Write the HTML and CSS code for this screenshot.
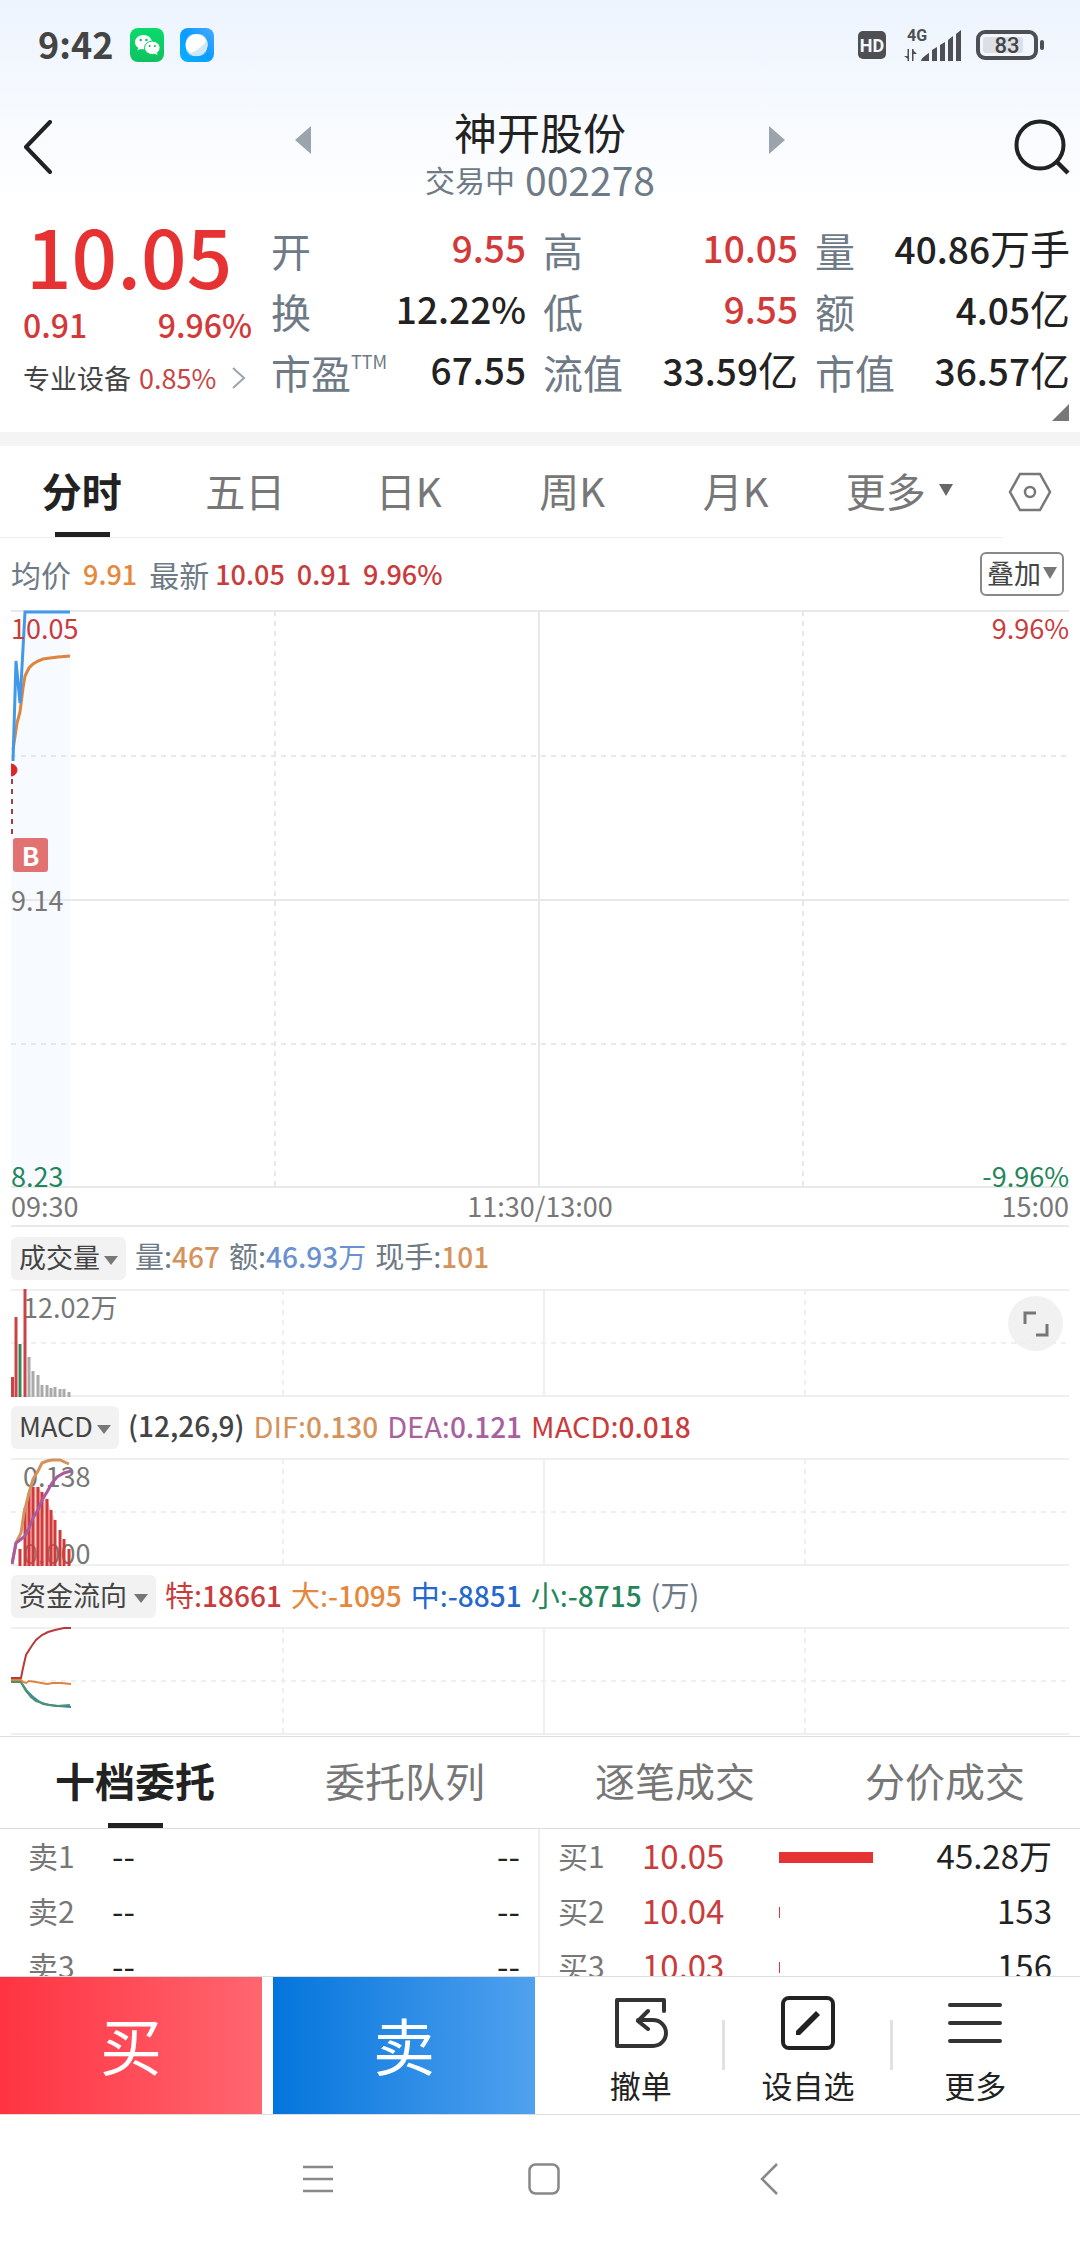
FILE: index.html
```html
<!DOCTYPE html>
<html lang="zh-CN">
<head>
<meta charset="utf-8">
<meta name="viewport" content="width=device-width, initial-scale=1">
<title>神开股份 002278</title>
<link rel="stylesheet" href="styles.css">
</head>
<body>
<div class="app">
  <div class="top">
    <div class="status">
      <span class="clock">9:42</span>
      <svg class="app-icon" width="34" height="34" viewBox="0 0 34 34" aria-hidden="true">
        <defs><linearGradient id="wx" x1="0" y1="0" x2="0" y2="1"><stop offset="0" stop-color="#09dc6b"/><stop offset="1" stop-color="#10c160"/></linearGradient></defs>
        <rect width="34" height="34" rx="8" fill="url(#wx)"/>
        <path d="M13.500 7C8.800 7 5 10.200 5 14.200c0 2.300 1.200 4.200 3.200 5.500L7.500 22.500l3-1.600c1 .3 2 .4 3 .4C18 21.300 22 18.200 22 14.200S18.200 7 13.500 7z" fill="#fff"/>
        <ellipse cx="22.300" cy="19.800" rx="7.800" ry="6.700" fill="#fff" stroke="#0ecb64" stroke-width="1"/>
        <path d="M24 25l3.500 2.200-.7-3z" fill="#fff"/>
        <g fill="#10b95c"><circle cx="10.700" cy="12" r="1.200"/><circle cx="16.400" cy="12" r="1.200"/><circle cx="19.700" cy="18" r="1"/><circle cx="24.800" cy="18" r="1"/></g>
      </svg>
      <svg class="app-icon" width="34" height="34" viewBox="0 0 34 34" aria-hidden="true">
        <defs><linearGradient id="br" x1="0" y1="1" x2="1" y2="0"><stop offset="0" stop-color="#07b2ff"/><stop offset=".5" stop-color="#0a9cff"/><stop offset="1" stop-color="#4ca8ff"/></linearGradient></defs>
        <rect width="34" height="34" rx="8" fill="url(#br)"/>
        <rect x="6" y="6" width="21" height="22" rx="7" fill="#fff" opacity=".25"/>
        <circle cx="16.500" cy="17" r="11" fill="#fff"/>
        <path d="M27 12c2 6-1 13-7 15.500-4 1.500-8 .5-10.500-2C17 23 23 18 27 12z" fill="#cfe6fb"/>
      </svg>
      <span class="grow"></span>
      <svg class="hd" width="28" height="28" viewBox="0 0 28 28" role="img" aria-label="HD">
        <rect width="28" height="28" rx="5" fill="#4e4f53"/>
        <text x="14" y="21" text-anchor="middle" font-family="Roboto, sans-serif" font-weight="700" font-size="18" fill="#f3f7fd">HD</text>
      </svg>
      <svg class="signal" width="58" height="36" viewBox="0 -4 58 36" role="img" aria-label="4G">
        <text x="3" y="12" font-family="Roboto, sans-serif" font-weight="700" font-size="16" fill="#4e4f53">4G</text>
        <path d="M5 20v12H3.500v-2.500L0 27h3.500v-7zM8 32V20h1.500v1.500L13 25H9.500v7z" fill="#4e4f53"/>
        <path d="M17 32q0-3 8-8v8zM28 21l5-3v14h-5zM36 16l5-3v19h-5zM44 11l5-4v25h-5zM52 5l5-4v31h-5z" fill="#4e4f53"/>
      </svg>
      <svg width="70" height="30" viewBox="0 0 70 30" role="img" aria-label="83%">
        <rect x="2" y="2" width="58" height="26" rx="7" fill="none" stroke="#4e4f53" stroke-width="4"/>
        <rect x="7" y="7" width="40" height="16" rx="3" fill="#dcdfe5"/>
        <rect x="64" y="10" width="4" height="10" rx="2" fill="#4e4f53"/>
        <text x="31" y="23" text-anchor="middle" font-family="Roboto, sans-serif" font-weight="500" font-size="22" fill="#444">83</text>
      </svg>
    </div>
    <header class="title-bar">
      <button class="icon-btn back" aria-label="返回"><svg width="30" height="54" viewBox="0 0 30 54"><path d="M27 2L3 27l24 25" fill="none" stroke="#222" stroke-width="4" stroke-linecap="round" stroke-linejoin="round"/></svg></button>
      <div class="switcher">
        <button class="icon-btn" aria-label="上一只"><svg width="16" height="28" viewBox="0 0 16 28"><path d="M16 0v28L0 14z" fill="#9ba3ad"/></svg></button>
        <div class="names">
          <h1>神开股份</h1>
          <p><span>交易中</span><span class="code">002278</span></p>
        </div>
        <button class="icon-btn" aria-label="下一只"><svg width="16" height="28" viewBox="0 0 16 28"><path d="M0 0v28l16-14z" fill="#9ba3ad"/></svg></button>
      </div>
      <button class="icon-btn" aria-label="搜索"><svg width="56" height="56" viewBox="0 0 56 56"><circle cx="26" cy="26" r="23.500" fill="none" stroke="#222" stroke-width="4"/><path d="M43 43l11 11" stroke="#222" stroke-width="4.500"/></svg></button>
    </header>
    <section class="quote">
      <div class="price">
        <strong>10.05</strong>
        <div class="change"><span>0.91</span><span>9.96%</span></div>
        <a class="sector" href="#">专业设备 <span>0.85%</span><svg width="14" height="22" viewBox="0 0 14 22"><path d="M1 1l11 10L1 21" fill="none" stroke="#9ba3ad" stroke-width="2"/></svg></a>
      </div>
      <dl class="stats">
        <div><dt>开</dt><dd class="up">9.55</dd></div>
        <div><dt>高</dt><dd class="up">10.05</dd></div>
        <div><dt>量</dt><dd>40.86<span>万手</span></dd></div>
        <div><dt>换</dt><dd>12.22%</dd></div>
        <div><dt>低</dt><dd class="up">9.55</dd></div>
        <div><dt>额</dt><dd>4.05<span>亿</span></dd></div>
        <div><dt>市盈<sup>TTM</sup></dt><dd>67.55</dd></div>
        <div><dt>流值</dt><dd>33.59<span>亿</span></dd></div>
        <div><dt>市值</dt><dd>36.57<span>亿</span></dd></div>
      </dl>
      <svg class="corner" width="17" height="17" viewBox="0 0 17 17" aria-hidden="true"><path d="M17 0v17H0z" fill="#777"/></svg>
    </section>
  </div>

  <div class="periods">
    <nav>
      <button class="tab active">分时</button>
      <button class="tab">五日</button>
      <button class="tab">日K</button>
      <button class="tab">周K</button>
      <button class="tab">月K</button>
      <button class="tab more">更多<svg width="14" height="12" viewBox="0 0 14 12"><path d="M0 0h14L7 12z" fill="#666"/></svg></button>
    </nav>
    <button class="icon-btn gear" aria-label="设置"><svg width="44" height="40" viewBox="0 0 44 40"><path d="M12 2h20l10 18-10 18H12L2 20z" fill="none" stroke="#777" stroke-width="2.500"/><circle cx="22" cy="20" r="5" fill="none" stroke="#777" stroke-width="2.500"/></svg></button>
  </div>

  <main class="charts">
    <div class="legend">
      <span>均价</span><span class="num orange">9.91</span><span class="latest">最新<span class="num red">10.05</span></span><span class="num red">0.91</span><span class="num red">9.96%</span>
      <button class="overlay">叠加<svg width="14" height="12" viewBox="0 0 14 12"><path d="M0 0h14L7 12z" fill="#777"/></svg></button>
    </div>
    <div class="plot">
      <svg viewBox="0 0 1058 578" preserveAspectRatio="none" height="578" aria-hidden="true">
        <path d="M0 151L5 51l4 42 5-91h45v574H0z" fill="#f7faff"/>
        <g stroke="#e8e8e8" stroke-width="2" fill="none">
          <path d="M0 1h1058M0 290h1058M0 577h1058M528 1v576"/>
          <path d="M0 146h1058M0 434h1058M264 1v576M792 1v576" stroke-dasharray="5 5"/>
        </g>
        <path d="M2 140L6 113l3-11 3-24 2-12 4-8 4-4 5-3 5-2 7-1 8-1 12-1" fill="none" stroke="#dd843f" stroke-width="3"/>
        <path d="M2 151L5 51l4 42 5-91h45" fill="none" stroke="#4299ea" stroke-width="3"/>
        <path d="M0 154a6 6 0 0 1 0 12z" fill="#d92626" stroke="#d92626"/>
        <path d="M1 169v56" stroke="#a04040" stroke-width="2" stroke-dasharray="5 5"/>
      </svg>
      <span class="mark red at-top">10.05</span>
      <span class="mark red at-top end">9.96%</span>
      <span class="mark at-mid">9.14</span>
      <span class="mark green at-bottom">8.23</span>
      <span class="mark green at-bottom end">-9.96%</span>
      <span class="buy-flag">B</span>
    </div>
    <div class="times"><span>09:30</span><span>11:30/13:00</span><span>15:00</span></div>

    <div class="indicator">
      <label class="pick"><select aria-label="指标一"><option>成交量</option></select></label>
      <span>量:<b class="tan">467</b></span><span>额:<b class="sky">46.93<i>万</i></b></span><span>现手:<b class="tan">101</b></span>
    </div>
    <div class="plot">
      <span class="mark sub-top">12.02万</span>
      <svg viewBox="0 0 1058 108" preserveAspectRatio="none" height="108" aria-hidden="true">
        <g stroke="#efefef" stroke-width="2" fill="none">
          <path d="M0 1h1058M0 107h1058M533 1v106"/>
          <path d="M0 54h1058M272 1v106M794 1v106" stroke-dasharray="5 5"/>
        </g>
        <g stroke-width="3">
          <path d="M1.500 88v20M5 28v80M14 0v108" stroke="#c94444"/>
          <path d="M9 55v53" stroke="#328661"/>
          <path d="M18 68v40M22 82v26M27 86v22M31 96v12M36 96v12M40 99v9M44 98v10M49 100v8M53 100v8M58 103v5" stroke="#aaa"/>
        </g>
      </svg>
      <button class="expand" aria-label="全屏"><svg width="26" height="26" viewBox="0 0 26 26"><path d="M2 13V2h11M24 13v11H13" fill="none" stroke="#777" stroke-width="3"/></svg></button>
    </div>

    <div class="indicator">
      <label class="pick"><select aria-label="指标二"><option>MACD</option></select></label>
      <b class="dark">(12,26,9)</b><span class="tan">DIF:<b>0.130</b></span><span class="purple">DEA:<b>0.121</b></span><span class="red">MACD:<b>0.018</b></span>
    </div>
    <div class="plot">
      <span class="mark sub-top">0.138</span>
      <span class="mark sub-bottom">0.000</span>
      <svg viewBox="0 0 1058 108" preserveAspectRatio="none" height="108" aria-hidden="true">
        <g stroke="#efefef" stroke-width="2" fill="none">
          <path d="M0 1h1058M0 107h1058M533 1v106"/>
          <path d="M0 54h1058M272 1v106M794 1v106" stroke-dasharray="5 5"/>
        </g>
        <path d="M14 50l4-15 4-6h5l4 5 5 7 4 11 4 10v46H14z" fill="#f3766e" opacity=".35"/>
        <path d="M9 91v17M14 50v58M18 35v73M22 29v79M27 29v79M31 34v74M36 41v67M40 52v56M44 62v46M49 72v36M53 81v27M58 91v17" stroke="#cf3b3b" stroke-width="3"/>
        <path d="M1 106L5 85l5-10 3-20 5-20 4-14 5-8 4-8 5-2 5-1h8l9 4" fill="none" stroke="#d5935c" stroke-width="3"/>
        <path d="M1 106L5 85l4-3 5-4 4-8 4-10 5-8 4-10 5-8 5-9 5-6 7-4 7-2" fill="none" stroke="#ab5aa0" stroke-width="3"/>
      </svg>
    </div>

    <div class="indicator">
      <label class="pick wide"><select aria-label="指标三"><option>资金流向</option></select></label>
      <span class="red">特:<b>18661</b></span><span class="orange">大:<b>-1095</b></span><span class="blue">中:<b>-8851</b></span><span class="green">小:<b>-8715</b></span><span>(万)</span>
    </div>
    <div class="plot">
      <svg viewBox="0 0 1058 108" preserveAspectRatio="none" height="108" aria-hidden="true">
        <g stroke="#efefef" stroke-width="2" fill="none">
          <path d="M0 1h1058M0 107h1058M533 1v106"/>
          <path d="M0 54h1058M272 1v106M794 1v106" stroke-dasharray="5 5"/>
        </g>
        <g fill="none" stroke-width="2">
          <path d="M0 54h9l3 4 4 6 5 5 5 4 6 4 7 1 8 1 13 1" stroke="#3d83b5"/>
          <path d="M0 55h10l2 4 3 5 5 6 5 4 6 2 7 2 8 1 13-1" stroke="#4b9368"/>
          <path d="M0 53h10l2 2 3 1 3-2 7 1 11 2 6-1h8l10 1" stroke="#dd843f"/>
          <path d="M0 51h10l2-10 3-13 5-8 5-7 6-5 6-3 7-2 9-2h7" stroke="#b93a3a"/>
        </g>
      </svg>
    </div>
  </main>

  <nav class="book-tabs">
    <button class="tab active">十档委托</button>
    <button class="tab">委托队列</button>
    <button class="tab">逐笔成交</button>
    <button class="tab">分价成交</button>
  </nav>
  <section class="book">
    <table class="asks">
      <tbody>
        <tr><th scope="row">卖1</th><td>--</td><td class="qty">--</td></tr>
        <tr><th scope="row">卖2</th><td>--</td><td class="qty">--</td></tr>
        <tr><th scope="row">卖3</th><td>--</td><td class="qty">--</td></tr>
      </tbody>
    </table>
    <table class="bids">
      <tbody>
        <tr><th scope="row">买1</th><td class="bid">10.05</td><td class="depth"><span style="width:94px"></span></td><td class="qty">45.28万</td></tr>
        <tr><th scope="row">买2</th><td class="bid">10.04</td><td class="depth"><span style="width:1px"></span></td><td class="qty">153</td></tr>
        <tr><th scope="row">买3</th><td class="bid">10.03</td><td class="depth"><span style="width:1px"></span></td><td class="qty">156</td></tr>
      </tbody>
    </table>
  </section>

  <footer class="actions">
    <button class="trade buy">买</button>
    <button class="trade sell">卖</button>
    <div class="tools">
      <button class="tool">
        <svg width="54" height="54" viewBox="0 0 54 54"><path d="M50 15V4H3v46h36a12.500 12.500 0 0 0 0-26H24m10-9L24 25l10 8" fill="none" stroke="#333" stroke-width="4" stroke-linejoin="round" stroke-linecap="round"/></svg>
        撤单
      </button>
      <button class="tool">
        <svg width="54" height="54" viewBox="0 0 54 54"><rect x="2" y="2" width="50" height="50" rx="6" fill="none" stroke="#222" stroke-width="4"/><path d="M15 35l20-20 4 4-20 20h-4z" fill="#222"/></svg>
        设自选
      </button>
      <button class="tool">
        <svg width="54" height="54" viewBox="0 0 54 54"><path d="M2 9h50M2 27h50M2 45h50" stroke="#333" stroke-width="4" stroke-linecap="round"/></svg>
        更多
      </button>
    </div>
  </footer>
  <nav class="system">
    <button class="icon-btn" aria-label="任务"><svg width="32" height="32" viewBox="0 0 32 32"><path d="M1 4h30M1 16h30M1 28h30" stroke="#888" stroke-width="2.500"/></svg></button>
    <button class="icon-btn" aria-label="主页"><svg width="32" height="32" viewBox="0 0 32 32"><rect x="1.500" y="1.500" width="29" height="29" rx="6" fill="none" stroke="#888" stroke-width="2.500"/></svg></button>
    <button class="icon-btn" aria-label="后退"><svg width="32" height="32" viewBox="0 0 32 32"><path d="M23 1L8 16l15 15" fill="none" stroke="#888" stroke-width="2.500"/></svg></button>
  </nav>
</div>
</body>
</html>
```
FILE: styles.css
```css
* {
  box-sizing: border-box;
}

body {
  margin: 0;
  background: #fff;
  color: #222;
  font-family: "Noto Sans CJK SC", "Noto Sans", sans-serif;
}

button,
select {
  margin: 0;
  padding: 0;
  border: 0;
  background: none;
  color: inherit;
  font: inherit;
}

svg {
  display: block;
  flex: none;
}

i {
  font-style: normal;
  font-weight: 400;
}

.app {
  display: flex;
  flex-direction: column;
  height: 100vh;
}

.red { color: #c93c3c; }
.orange { color: #e5873c; }
.tan { color: #d5935c; }
.green { color: #23865a; }
.sky { color: #6a90cf; }
.blue { color: #2567cb; }
.purple { color: #a8609f; }
.dark { color: #444; }

/* status bar and quote header */
.top {
  flex: none;
  border-bottom: 14px solid #f4f4f4;
  background: linear-gradient(#edf4fe, #fff 210px);
}

.status {
  display: flex;
  align-items: center;
  height: 90px;
  padding: 0 34px 0 38px;
}

.clock {
  margin-right: 17px;
  padding-bottom: 4px;
  color: #444;
  font-size: 36px;
  font-weight: 700;
}

.app-icon { margin-right: 16px; }
.grow { flex: 1; }
.hd { margin-right: 18px; }

.signal {
  margin-right: 14px;
  margin-bottom: 4px;
}

.title-bar {
  display: flex;
  align-items: center;
  justify-content: space-between;
  height: 120px;
  padding: 0 10px 0 23px;
}

.icon-btn {
  display: flex;
  align-items: center;
  justify-content: center;
}

.title-bar > .icon-btn { margin-bottom: 6px; }
.back { padding-right: 13px; }

.switcher {
  display: flex;
  align-items: flex-start;
  justify-content: space-between;
  width: 490px;
  padding-top: 6px;
}

.switcher .icon-btn { margin-top: 21px; }
.names { text-align: center; }

.names h1 {
  margin: 0;
  font-size: 43px;
  font-weight: 400;
  line-height: 52px;
}

.names p {
  display: flex;
  align-items: center;
  gap: 10px;
  margin: 0;
  color: #6e7a86;
  font-size: 30px;
  line-height: 44px;
}

.names .code { font-size: 39px; }

.quote {
  position: relative;
  display: flex;
  gap: 19px;
  height: 222px;
  padding: 8px 10px 0 23px;
}

.price {
  width: 229px;
  color: #d23a3a;
}

.price strong {
  display: block;
  padding: 0 0 8px 3px;
  color: #e63232;
  font-size: 80px;
  font-weight: 500;
  line-height: 72px;
}

.change {
  display: flex;
  justify-content: space-between;
  font-size: 32px;
  font-weight: 500;
  line-height: 52px;
}

.sector {
  display: flex;
  align-items: center;
  gap: 8px;
  color: #444;
  font-size: 27px;
  line-height: 56px;
  text-decoration: none;
}

.sector span { color: #c94444; }
.sector svg { margin-left: 8px; }

.stats {
  display: grid;
  flex: 1;
  grid-template-columns: repeat(3, 1fr);
  grid-auto-rows: 61px;
  column-gap: 17px;
  margin: 0;
}

.stats div {
  display: flex;
  justify-content: space-between;
  line-height: 60px;
}

.stats dt {
  padding-top: 2px;
  color: #6e7a86;
  font-size: 40px;
  white-space: nowrap;
}

.stats sup {
  position: relative;
  top: -20px;
  font-size: 18px;
  line-height: 0;
  vertical-align: baseline;
}

.stats dd {
  margin: 0;
  font-size: 37px;
  font-weight: 500;
  line-height: 58px;
  white-space: nowrap;
}

.stats dd span {
  font-size: 40px;
  font-weight: 400;
}

.stats .up { color: #d23a3a; }

.corner {
  position: absolute;
  right: 11px;
  bottom: 11px;
}

/* tabs */
.periods {
  display: flex;
  flex: none;
  height: 92px;
}

.periods nav {
  display: flex;
  flex: 1;
  padding-right: 16px;
  border-bottom: 1px solid #eee;
}

.tab {
  position: relative;
  flex: 1 1 0;
  padding-bottom: 4px;
  color: #777;
  font-size: 40px;
  line-height: 80px;
}

.tab.active {
  color: #222;
  font-weight: 700;
}

.tab.active::after {
  position: absolute;
  bottom: 0;
  left: 50%;
  width: 55px;
  height: 5px;
  margin-left: -27px;
  background: #222;
  content: "";
}

.tab.more {
  display: flex;
  align-items: center;
  justify-content: center;
  gap: 13px;
  padding-right: 6px;
}

.gear {
  justify-content: flex-start;
  width: 77px;
  padding-left: 5px;
}

/* charts */
.charts {
  flex: none;
  padding: 0 11px;
}

.legend {
  display: flex;
  align-items: center;
  gap: 12px;
  height: 72px;
  padding-bottom: 1px;
  color: #6e7a86;
  font-size: 30px;
}

.latest {
  display: flex;
  align-items: center;
  gap: 6px;
}

.num {
  font-size: 27px;
  font-weight: 500;
}

.overlay {
  display: flex;
  align-items: center;
  gap: 2px;
  height: 44px;
  margin-right: 5px;
  margin-left: auto;
  padding: 0 5px 2px;
  border: 2px solid #888;
  border-radius: 6px;
  color: #444;
  font-size: 27px;
}

.plot { position: relative; }

.plot > svg {
  position: relative;
  width: 100%;
}

.mark {
  position: absolute;
  left: 0;
  color: #777;
  font-size: 27px;
  line-height: 34px;
}

.mark.red { color: #c93c3c; }
.mark.green { color: #23865a; }
.mark.end { right: 0; left: auto; }
.at-top { top: 1px; }
.at-mid { top: 273px; }
.at-bottom { bottom: -5px; }
.sub-top { top: 1px; left: 12px; }
.sub-bottom { bottom: -4px; left: 12px; }

.buy-flag {
  position: absolute;
  top: 228px;
  left: 2px;
  width: 35px;
  border-radius: 3px;
  background: #e27272;
  color: #fff;
  font-size: 26px;
  font-weight: 700;
  line-height: 34px;
  text-align: center;
}

.times {
  display: flex;
  justify-content: space-between;
  height: 39px;
  border-bottom: 2px solid #e8e8e8;
  color: #777;
  font-size: 27px;
  line-height: 36px;
}

.indicator {
  display: flex;
  align-items: center;
  gap: 9px;
  height: 61px;
  color: #6e7a86;
  font-size: 29px;
}

.times + .indicator { height: 62px; }

.indicator > span,
.indicator > b {
  padding-bottom: 6px;
}

.indicator b {
  font-size: 28px;
  font-weight: 500;
}

.pick {
  position: relative;
  display: flex;
}

.pick select {
  height: 43px;
  padding: 0 26px 5px 8px;
  border-radius: 6px;
  background: #f2f2f2;
  color: #444;
  font-size: 27px;
  appearance: none;
}

.pick.wide select { padding-right: 29px; }

.pick::after {
  position: absolute;
  top: 19px;
  right: 8px;
  border: 7px solid transparent;
  border-top: 9px solid #777;
  border-bottom: 0;
  content: "";
}

.expand {
  position: absolute;
  top: 7px;
  right: 6px;
  display: flex;
  align-items: center;
  justify-content: center;
  width: 55px;
  height: 55px;
  border-radius: 50%;
  background: rgba(238, 238, 238, 0.8);
}

/* order book */
.book-tabs {
  display: flex;
  flex: none;
  height: 93px;
  margin-top: 1px;
  border-top: 1px solid #ddd;
  border-bottom: 1px solid #ddd;
}

.book-tabs .tab { padding-bottom: 6px; }

.book {
  display: grid;
  flex: 1;
  grid-template-columns: 1fr 1fr;
  min-height: 0;
  overflow: hidden;
}

.book table {
  width: 100%;
  height: 165px;
  border-collapse: collapse;
  table-layout: fixed;
}

.book tr { height: 55px; }

.book th,
.book td {
  padding: 0;
  font-size: 33px;
  font-weight: 400;
  line-height: 53px;
  text-align: left;
  vertical-align: top;
}

.book th {
  width: 102px;
  color: #777;
  font-size: 30px;
}

.asks { border-right: 2px solid #efefef; }

.asks th {
  width: 112px;
  padding-left: 28px;
}

.bids th { padding-left: 18px; }
.bids .bid { width: 137px; color: #c93c3c; }
.depth { width: 110px; }
.book .qty { text-align: right; }
.asks .qty { padding-right: 18px; }
.bids .qty { padding-right: 28px; }

.depth span {
  display: block;
  height: 11px;
  margin-top: 23px;
  background: #e63232;
}

/* bottom actions */
.actions {
  display: flex;
  flex: none;
  gap: 11px;
  height: 139px;
  border-top: 1px solid #ddd;
  border-bottom: 1px solid #ddd;
}

.trade {
  flex: 0 1 262px;
  padding-bottom: 3px;
  color: #fff;
  font-size: 62px;
}

.buy { background: linear-gradient(90deg, #ff3341, #ff6670); }
.sell { background: linear-gradient(90deg, #0475dc, #50a1ef); }

.tools {
  display: flex;
  flex: 1;
  padding: 0 21px 0 11px;
}

.tool {
  position: relative;
  display: flex;
  flex: 1 1 0;
  flex-direction: column;
  align-items: center;
  gap: 10px;
  padding-top: 19px;
  font-size: 31px;
  line-height: 50px;
}

.tool + .tool::before {
  position: absolute;
  top: 43px;
  left: -2px;
  width: 3px;
  height: 50px;
  background: #e2e2e2;
  content: "";
}

.system {
  display: flex;
  flex: none;
  justify-content: center;
  gap: 194px;
  height: 129px;
  padding: 0 0 2px 8px;
}
```
